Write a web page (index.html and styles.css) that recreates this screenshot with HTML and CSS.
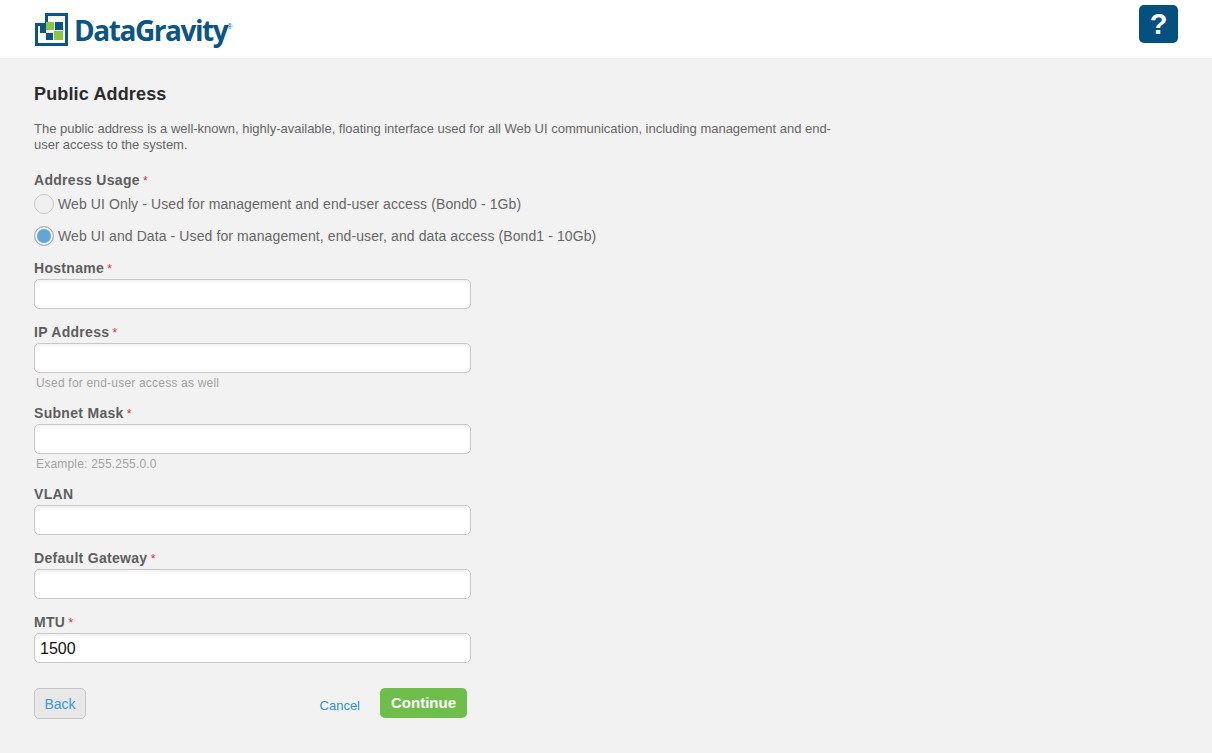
FILE: index.html
```html
<!DOCTYPE html>
<html lang="en">
<head>
<meta charset="utf-8">
<title>Public Address</title>
<link rel="stylesheet" href="styles.css">
</head>
<body>
<header class="topbar">
  <div class="logo">
    <svg class="logo-mark" width="33" height="33" viewBox="0 0 33 33" aria-hidden="true">
      <path fill="#0b5586" fill-rule="evenodd" d="M10 0H33V33H0V10H10ZM13 3V13H3V30H30V3Z"/>
      <rect x="11" y="9" width="8" height="8" fill="#8cc63f"/>
      <rect x="20" y="9" width="8" height="8" fill="#0b5586"/>
      <rect x="5" y="13" width="6" height="7" fill="#0b5586"/>
      <rect x="11" y="20" width="7" height="7" fill="#0b5586"/>
      <rect x="19" y="18" width="9" height="9" fill="#8cc63f"/>
    </svg>
    <span class="logo-text">DataGravity</span><span class="logo-reg">®</span>
  </div>
  <a class="help" href="#">?</a>
</header>
<main class="page">
  <h1 class="title">Public Address</h1>
  <p class="desc">The public address is a well-known, highly-available, floating interface used for all Web UI communication, including management and end-user access to the system.</p>
  <form class="form">
    <div class="label usage-label">Address Usage <span class="req">*</span></div>
    <label class="radio-row"><span class="radio"></span>Web UI Only - Used for management and end-user access (Bond0 - 1Gb)</label>
    <label class="radio-row"><span class="radio radio-on"></span>Web UI and Data - Used for management, end-user, and data access (Bond1 - 10Gb)</label>

    <div class="field first">
      <div class="label">Hostname <span class="req">*</span></div>
      <input class="input" type="text">
    </div>
    <div class="field">
      <div class="label">IP Address <span class="req">*</span></div>
      <input class="input" type="text">
      <div class="hint">Used for end-user access as well</div>
    </div>
    <div class="field">
      <div class="label">Subnet Mask <span class="req">*</span></div>
      <input class="input" type="text">
      <div class="hint">Example: 255.255.0.0</div>
    </div>
    <div class="field">
      <div class="label">VLAN</div>
      <input class="input" type="text">
    </div>
    <div class="field">
      <div class="label">Default Gateway <span class="req">*</span></div>
      <input class="input" type="text">
    </div>
    <div class="field">
      <div class="label">MTU <span class="req">*</span></div>
      <input class="input" type="text" value="1500">
    </div>
    <div class="actions">
      <a class="btn-back" href="#">Back</a>
      <a class="cancel" href="#">Cancel</a>
      <a class="btn-continue" href="#">Continue</a>
    </div>
  </form>
</main>
</body>
</html>
```

FILE: styles.css
```css
* { box-sizing: border-box; }
html, body { margin: 0; height: 100%; }
body {
  background: #f2f2f2;
  font-family: "Liberation Sans", Arial, sans-serif;
  color: #666;
  overflow: hidden;
}
.topbar {
  height: 58px;
  background: #fff;
  display: flex;
  justify-content: space-between;
  align-items: flex-start;
  padding: 5px 34px 0 35px;
}
.logo { display: flex; align-items: flex-start; padding-top: 8px; }
.logo-mark { display: block; flex: none; }
.logo-text {
  font-family: "Open Sans", sans-serif;
  font-weight: 700;
  font-size: 28px;
  line-height: 36px;
  letter-spacing: -1.45px;
  color: #0b5586;
  margin-left: 6px;
  margin-top: -1px;
}
.logo-reg { font-size: 7px; color: #0b5586; margin-top: 10px; }
.help {
  width: 39px;
  height: 38px;
  border-radius: 5px;
  background: #04507f;
  color: #fff;
  font-weight: 700;
  font-size: 29px;
  line-height: 39px;
  text-align: center;
  text-decoration: none;
}
.page { padding: 0 34px; }
.title {
  margin: 25px 0 0;
  font-size: 18px;
  line-height: 22px;
  font-weight: 700;
  letter-spacing: 0.15px;
  color: #2b2b2b;
}
.desc {
  margin: 16px 0 0;
  width: 800px;
  font-size: 13px;
  letter-spacing: -0.015px;
  line-height: 16px;
}
.form { margin-top: 18px; width: 437px; }
.label {
  height: 18px;
  font-size: 14px;
  font-weight: 700;
  line-height: 18px;
  letter-spacing: 0.3px;
  color: #5e5e5e;
  margin-bottom: 2px;
}
.usage-label { margin-bottom: 4px; }
.req { color: #e8262e; font-size: 12px; font-weight: 400; margin-left: -1px; }
.radio-row {
  display: flex;
  align-items: center;
  gap: 4px;
  height: 22px;
  margin-bottom: 10px;
  font-size: 14px;
  letter-spacing: 0.1px;
  white-space: nowrap;
}
.radio {
  width: 20px;
  height: 20px;
  border-radius: 50%;
  border: 1px solid #c8c8c8;
  background: #f0f0f0;
  flex: none;
}
.radio-on {
  background: #62a6d8;
  box-shadow: inset 0 0 0 2px #f4f4f4;
  border-color: #b0b0b0;
}
.field { margin-top: 14px; }
.field.first { margin-top: 0; padding-top: 2px; }
.input {
  display: block;
  width: 437px;
  height: 30px;
  padding: 1px 5px 0;
  border: 1px solid #c8c8c8;
  border-radius: 5px;
  background: #fff;
  box-shadow: inset 0 2px 3px rgba(0, 0, 0, 0.06);
  font-family: "Liberation Sans", Arial, sans-serif;
  font-size: 16px;
  color: #111;
  outline: none;
}
.hint {
  height: 17px;
  padding: 2px 0 0 2px;
  font-size: 12px;
  letter-spacing: 0.2px;
  line-height: 16px;
  color: #a3a3a3;
}
.actions {
  display: flex;
  align-items: flex-start;
  margin-top: 25px;
}
.btn-back {
  width: 52px;
  height: 31px;
  border: 1px solid #c4c4c4;
  border-radius: 5px;
  background: #e8e8e8;
  color: #3a98e0;
  font-size: 14px;
  line-height: 30px;
  text-align: center;
  text-decoration: none;
}
.cancel {
  margin-left: auto;
  margin-top: 10px;
  font-size: 13px;
  line-height: 16px;
  color: #2a93d5;
  text-decoration: none;
}
.btn-continue {
  width: 87px;
  height: 30px;
  margin-left: 20px;
  margin-right: 4px;
  border-radius: 5px;
  background: #6fbd4a;
  color: #fff;
  font-size: 15px;
  font-weight: 700;
  line-height: 29px;
  text-align: center;
  text-decoration: none;
}
```
